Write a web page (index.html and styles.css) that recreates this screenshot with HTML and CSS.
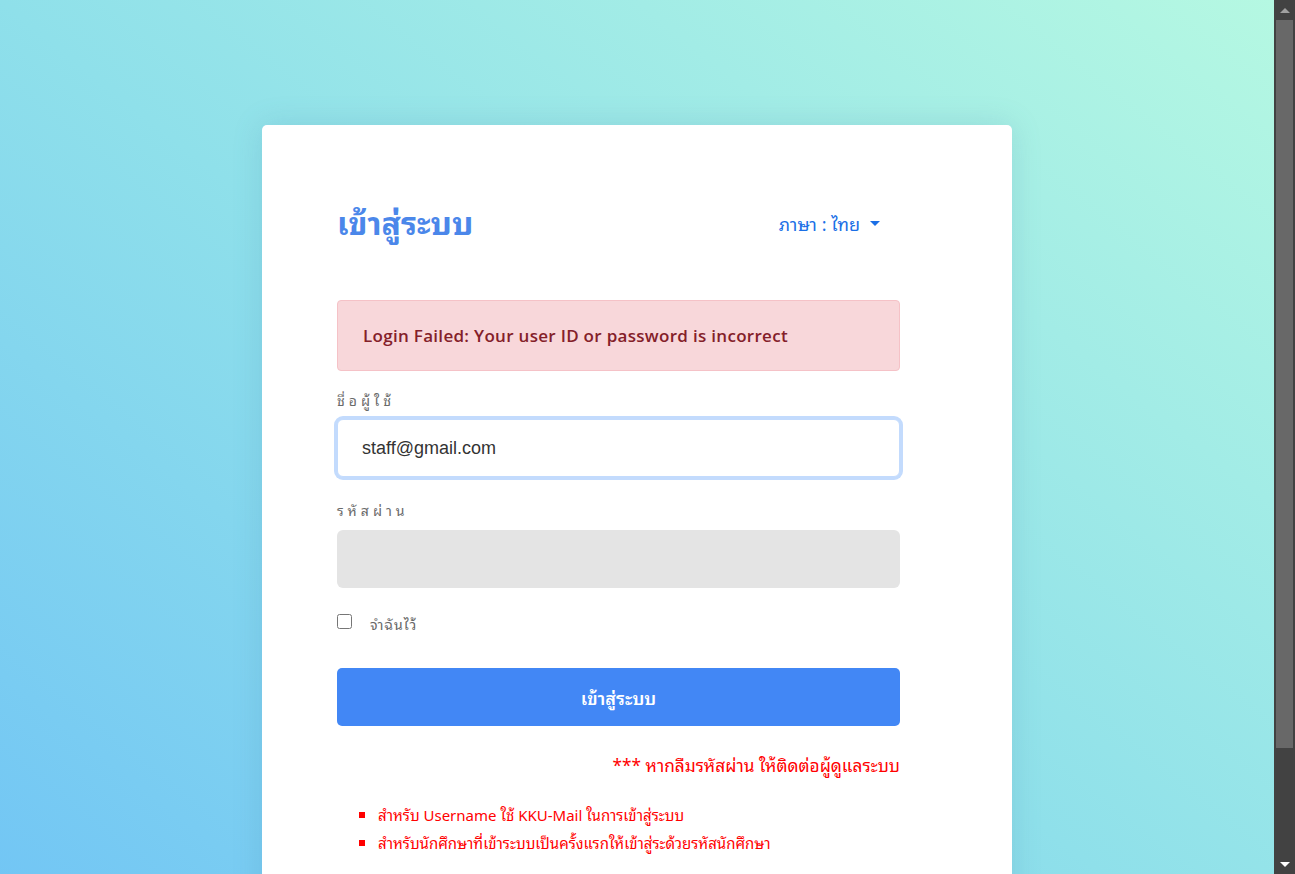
FILE: index.html
```html
<!DOCTYPE html>
<html lang="th">
<head>
<meta charset="utf-8">
<title>เข้าสู่ระบบ</title>
<link rel="stylesheet" href="styles.css">
</head>
<body>
<main class="page">
  <section class="card">
    <div class="card-header">
      <h1 class="title">เข้าสู่ระบบ</h1>
      <div class="lang">ภาษา : ไทย <span class="caret"></span></div>
    </div>
    <div class="alert">Login Failed: Your user ID or password is incorrect</div>
    <form class="form">
      <label class="label" for="user">ชื่อผู้ใช้</label>
      <input id="user" class="input input-focus" type="text" value="staff@gmail.com">
      <label class="label label-pass" for="pass">รหัสผ่าน</label>
      <input id="pass" class="input input-pass" type="password" value="">
      <div class="remember">
        <input type="checkbox" class="check" id="rem">
        <label for="rem" class="remember-label">จำฉันไว้</label>
      </div>
      <button type="button" class="btn">เข้าสู่ระบบ</button>
    </form>
    <p class="forgot">*** หากลืมรหัสผ่าน ให้ติดต่อผู้ดูแลระบบ</p>
    <ul class="notes">
      <li>สำหรับ Username ใช้ KKU-Mail ในการเข้าสู่ระบบ</li>
      <li>สำหรับนักศึกษาที่เข้าระบบเป็นครั้งแรกให้เข้าสู่ระด้วยรหัสนักศึกษา</li>
    </ul>
  </section>
</main>
<div class="scrollbar" aria-hidden="true">
  <div class="sb-btn sb-up"></div>
  <div class="sb-track"><div class="sb-thumb"></div></div>
  <div class="sb-btn sb-down"></div>
</div>
</body>
</html>
```

FILE: styles.css
```css
html {
  background: #6fc4f5;
  scrollbar-width: none;
}
html::-webkit-scrollbar {
  display: none;
}
body {
  margin: 0;
  font-family: "Noto Sans Thai Looped", "Noto Sans", "Noto Sans Thai", "Liberation Sans", sans-serif;
  background: linear-gradient(to top right, #6ec2f6 0%, #8fe0ea 50%, #b5f8e2 100%);
  min-height: 1008px;
  width: 1274px;
}
.page {
  padding: 125px 0 58px 262px;
  width: 750px;
}
.card {
  background: #fff;
  border-radius: 5px;
  box-shadow: 0 0 30px rgba(60, 120, 160, 0.18);
  padding: 76px 112px 95px 75px;
}
.card-header {
  display: flex;
  justify-content: space-between;
  align-items: center;
  height: 40px;
}
.title {
  margin: 0;
  font-size: 32px;
  font-weight: 700;
  color: #4b87ea;
  line-height: 40px;
}
.lang {
  color: #1a6fe6;
  font-size: 18px;
  margin-right: 20px;
  padding-top: 4px;
  display: flex;
  align-items: center;
}
.caret {
  display: inline-block;
  margin-left: 10px;
  width: 0;
  height: 0;
  border-left: 5px solid transparent;
  border-right: 5px solid transparent;
  border-top: 5px solid #1a6fe6;
}
.alert {
  margin-top: 59px;
  background: #f8d7da;
  border: 1px solid #f5c2c7;
  border-radius: 4px;
  color: #842029;
  font-family: "Open Sans", "Noto Sans", sans-serif;
  font-weight: 600;
  font-size: 17px;
  letter-spacing: 0.3px;
  line-height: 27px;
  padding: 21px 25px;
}
.form {
  display: flex;
  flex-direction: column;
}
.label {
  margin-top: 19px;
  font-size: 14px;
  line-height: 20px;
  color: #6a6a6a;
  letter-spacing: 4px;
}
.input {
  box-sizing: border-box;
  width: 100%;
  height: 58px;
  margin-top: 9px;
  border-radius: 6px;
  border: 1px solid transparent;
  font-family: "Liberation Sans", Arial, sans-serif;
  font-size: 18px;
  color: #333;
  padding: 0 24px;
  outline: none;
}
.input-focus {
  background: #fff;
  border-color: #c3dbfd;
  box-shadow: 0 0 0 3px #c3dbfd;
}
.label-pass {
  margin-top: 23px;
}
.input-pass {
  background: #e4e4e4;
  margin-top: 10px;
}
.remember {
  display: flex;
  align-items: center;
  margin-top: 24px;
  height: 18px;
}
.check {
  margin: 0;
  width: 15px;
  height: 15px;
}
.remember-label {
  margin-left: 18px;
  font-size: 14px;
  color: #666;
  letter-spacing: 1px;
  padding-top: 4px;
}
.btn {
  margin-top: 38px;
  height: 58px;
  border: 0;
  border-radius: 5px;
  background: #4287f5;
  color: #fff;
  font-family: inherit;
  font-size: 18px;
  font-weight: 600;
}
.forgot {
  margin: 26px 0 0;
  text-align: right;
  color: #f00;
  font-size: 17.3px;
  line-height: 24px;
}
.notes {
  margin: 24px 0 0;
  padding-left: 41px;
  list-style: square;
  color: #f00;
  font-size: 15px;
  line-height: 28px;
}
.scrollbar {
  position: fixed;
  top: 0;
  right: 0;
  width: 21px;
  height: 100vh;
  background: #424242;
  display: flex;
  flex-direction: column;
}
.sb-btn {
  height: 20px;
  flex: none;
  display: flex;
  align-items: center;
  justify-content: center;
}
.sb-up::before,
.sb-down::before {
  content: "";
  width: 0;
  height: 0;
  border-left: 5px solid transparent;
  border-right: 5px solid transparent;
}
.sb-up::before {
  border-bottom: 5px solid #a0a0a0;
}
.sb-down::before {
  border-top: 5px solid #ffffff;
}
.sb-track {
  flex: 1;
  padding: 0 2px 106px;
}
.sb-thumb {
  height: 100%;
  background: #686868;
}
```
